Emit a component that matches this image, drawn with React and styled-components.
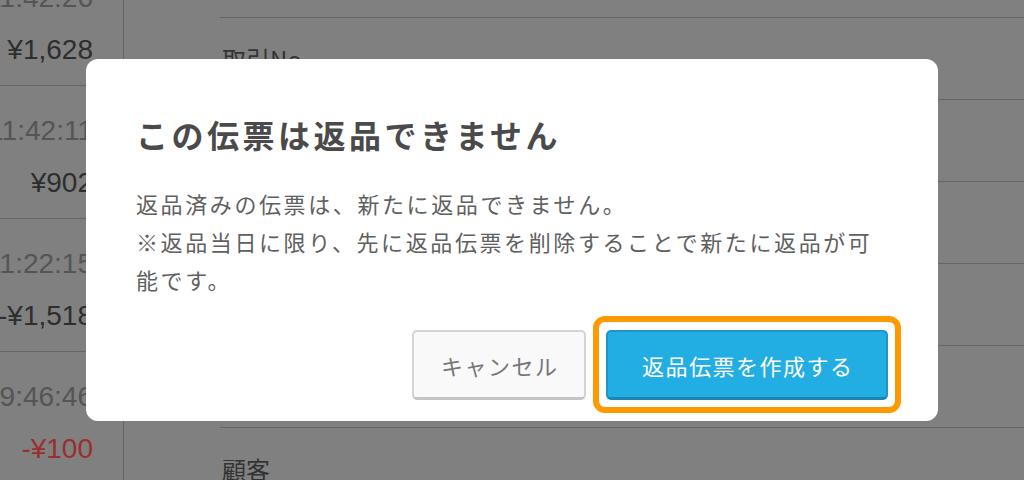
import styled, { createGlobalStyle } from "styled-components";

const GlobalStyle = createGlobalStyle`
  html, body {
    margin: 0;
    padding: 0;
    width: 1024px;
    height: 480px;
    overflow: hidden;
    background: #d6d6d6;
  }
  * {
    box-sizing: border-box;
  }
`;

const jp = `"Noto Sans CJK JP", "Noto Sans", sans-serif`;

const sales = [
  { time: "11:42:26", amount: "¥1,628" },
  { time: "11:42:11", amount: "¥902" },
  { time: "11:22:15", amount: "-¥1,518" },
  { time: "09:46:46", amount: "-¥100", refund: true },
];

const fields = ["日付", "取引No.", "日時", "担当者", "端末", "合計", "顧客"];

const App = () => {
  return (
    <>
      <GlobalStyle />
      <Page>
        <SalesList>
          {sales.map((s) => (
            <SaleRow key={s.time}>
              <Time>{s.time}</Time>
              <Amount $refund={s.refund}>{s.amount}</Amount>
            </SaleRow>
          ))}
        </SalesList>
        <Detail>
          {fields.map((f) => (
            <FieldRow key={f}>{f}</FieldRow>
          ))}
        </Detail>
      </Page>

      <Backdrop>
        <Dialog>
          <Title>この伝票は返品できません</Title>
          <Message>
            返品済みの伝票は、新たに返品できません。
            <br />
            ※返品当日に限り、先に返品伝票を削除することで新たに返品が可能です。
          </Message>
          <Footer>
            <Button $variant="cancel">キャンセル</Button>
            <Highlight>
              <Button $variant="primary">返品伝票を作成する</Button>
            </Highlight>
          </Footer>
        </Dialog>
      </Backdrop>
    </>
  );
};

const Page = styled.div`
  display: flex;
  flex-direction: row;
  width: 1024px;
  height: 480px;
  overflow: hidden;
  background: #d6d6d6;
`;

const SalesList = styled.div`
  display: flex;
  flex-direction: column;
  flex: 0 0 124px;
  width: 124px;
  min-width: 0;
  margin-top: -47px;
  border-right: 1px solid #aaa;
`;

const SaleRow = styled.div`
  display: flex;
  flex-direction: column;
  align-items: flex-end;
  gap: 20px;
  height: 133px;
  flex-shrink: 0;
  min-width: 0;
  padding: 30px 30px 0 0;
  border-bottom: 1px solid #aaa;
  font-family: "Liberation Sans", Arial, sans-serif;
  white-space: nowrap;
`;

const Time = styled.div`
  font-size: 28px;
  line-height: 30px;
  color: #8e8e8e;
`;

const Amount = styled.div`
  font-size: 28px;
  line-height: 34px;
  color: ${(p) => (p.$refund ? "#ff4f4f" : "#4d4d4d")};
`;

const Detail = styled.div`
  display: flex;
  flex-direction: column;
  flex: 1;
  min-width: 0;
  margin-top: -64px;
  padding-left: 96px;
`;

const FieldRow = styled.div`
  display: flex;
  align-items: center;
  height: 82px;
  flex-shrink: 0;
  padding-left: 2px;
  border-bottom: 1px solid #aaa;
  font-family: ${jp};
  font-size: 24px;
  color: #555;
`;

const Backdrop = styled.div`
  position: fixed;
  inset: 0;
  display: flex;
  align-items: center;
  justify-content: center;
  background: rgba(0, 0, 0, 0.4);
`;

const Dialog = styled.div`
  display: flex;
  flex-direction: column;
  width: 852px;
  padding: 55px 50px 21px 50px;
  background: #fff;
  border-radius: 12px;
  font-family: ${jp};
`;

const Title = styled.h2`
  margin: 0;
  font-size: 32px;
  line-height: 40px;
  font-weight: 700;
  letter-spacing: 3.5px;
  color: #4a4a4a;
`;

const Message = styled.p`
  margin: 30px 0 0;
  font-size: 22px;
  line-height: 38px;
  letter-spacing: 2.6px;
  color: #606060;
`;

const Footer = styled.div`
  display: flex;
  flex-direction: row;
  justify-content: flex-end;
  gap: 20px;
  margin-top: 32px;
`;

const Highlight = styled.div`
  position: relative;
  display: flex;
  &::after {
    content: "";
    position: absolute;
    inset: -14px -13px -13px -13px;
    border: 6px solid #ff9900;
    border-radius: 12px;
    pointer-events: none;
  }
`;

const Button = styled.button`
  display: flex;
  align-items: center;
  justify-content: center;
  width: ${(p) => (p.$variant === "primary" ? "282px" : "174px")};
  height: 70px;
  padding: 0 0 0 1.5px;
  font-family: ${jp};
  font-size: 22px;
  letter-spacing: 1.5px;
  border-radius: 5px;
  border: 2px solid
    ${(p) => (p.$variant === "primary" ? "#1f95c8" : "#d4d4d4")};
  border-bottom-width: 3px;
  border-bottom-color: ${(p) =>
    p.$variant === "primary" ? "#1a84b3" : "#c4c4c4"};
  background: ${(p) => (p.$variant === "primary" ? "#23aee3" : "#f9f9f9")};
  color: ${(p) => (p.$variant === "primary" ? "#fff" : "#777")};
  cursor: pointer;
`;

export default App;
